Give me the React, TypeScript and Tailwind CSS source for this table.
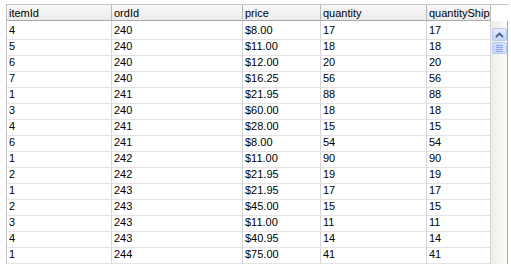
import React from "react";

const cols = ["itemId", "ordId", "price", "quantity", "quantityShipped"];

const rows: (string | number)[][] = [
  [4, 240, "$8.00", 17, 17],
  [5, 240, "$11.00", 18, 18],
  [6, 240, "$12.00", 20, 20],
  [7, 240, "$16.25", 56, 56],
  [1, 241, "$21.95", 88, 88],
  [3, 240, "$60.00", 18, 18],
  [4, 241, "$28.00", 15, 15],
  [6, 241, "$8.00", 54, 54],
  [1, 242, "$11.00", 90, 90],
  [2, 242, "$21.95", 19, 19],
  [1, 243, "$21.95", 17, 17],
  [2, 243, "$45.00", 15, 15],
  [3, 243, "$11.00", 11, 11],
  [4, 243, "$40.95", 14, 14],
  [1, 244, "$75.00", 41, 41],
];

const grid = "grid grid-cols-[105px_131px_78px_106px_64px]";

export default function App() {
  return (
    <div
      className="w-[511px] h-[267px] bg-white overflow-hidden pt-[4px] pl-[6px] text-[11px] text-black"
      style={{ fontFamily: '"Liberation Sans", Arial, sans-serif' }}
    >
      <div className="flex w-[502px] h-[260px] border-t border-l border-[#c4c4c4]">
        <div className="w-[484px] flex flex-col overflow-hidden">
          <div className={`${grid} h-[16px]`}>
            {cols.map((c) => (
              <div
                key={c}
                className="h-[16px] border-r border-b border-r-[#b9b9b9] border-b-[#a9a9a9] bg-linear-to-b from-[#f8f8f8] to-[#ebebeb] pl-[2px] pt-[1px] leading-[15px] whitespace-nowrap overflow-hidden"
              >
                {c}
              </div>
            ))}
          </div>
          {rows.map((r, i) => (
            <div key={i} className={`${grid} ${i === 0 ? "h-[19px]" : "h-[16px]"} shrink-0`}>
              {r.map((v, j) => (
                <div
                  key={j}
                  className={`border-r border-b border-r-[#d6d6d6] border-b-[#e3e3e3] pl-[2px] leading-[13px] whitespace-nowrap overflow-hidden ${
                    i === 0 ? "pt-[3px]" : ""
                  }`}
                >
                  {v}
                </div>
              ))}
            </div>
          ))}
        </div>
        <div className="w-[17px] flex flex-col">
          <div className="h-[16px] bg-white shrink-0" />
          <div className="flex-1 border-r border-[#a7a7a7] bg-linear-to-r from-[#eeede5] to-[#fbfbf8] flex flex-col pl-[1px] pt-[7px]">
            <div className="w-[15px] h-[13px] rounded-[2px] border border-[#b6c8f5] bg-linear-to-b from-[#e6edfe] to-[#c3d4fa] flex items-center justify-center">
              <svg width="9" height="6" viewBox="0 0 9 6">
                <path d="M1 5 L4.5 1.5 L8 5" fill="none" stroke="#4d6185" strokeWidth="1.8" />
              </svg>
            </div>
            <div className="mt-[1px] w-[15px] h-[12px] rounded-[2px] border border-[#b6c8f5] bg-linear-to-r from-[#c8d6fb] to-[#dbe5fe] flex flex-col items-center justify-center gap-[1px]">
              <div className="w-[7px] h-[1px] bg-[#8ca5e8]" />
              <div className="w-[7px] h-[1px] bg-[#8ca5e8]" />
              <div className="w-[7px] h-[1px] bg-[#8ca5e8]" />
              <div className="w-[7px] h-[1px] bg-[#8ca5e8]" />
            </div>
          </div>
        </div>
      </div>
    </div>
  );
}
